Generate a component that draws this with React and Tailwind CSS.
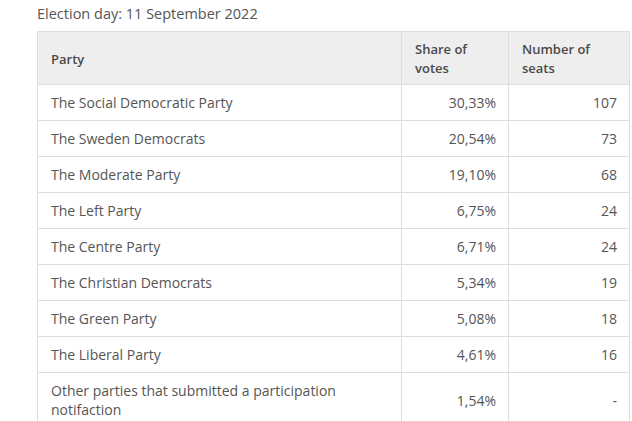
const rows = [
  ["The Social Democratic Party", "30,33%", "107"],
  ["The Sweden Democrats", "20,54%", "73"],
  ["The Moderate Party", "19,10%", "68"],
  ["The Left Party", "6,75%", "24"],
  ["The Centre Party", "6,71%", "24"],
  ["The Christian Democrats", "5,34%", "19"],
  ["The Green Party", "5,08%", "18"],
  ["The Liberal Party", "4,61%", "16"],
  ["Other parties that submitted a participation notifaction", "1,54%", "-"],
];

export default function App() {
  return (
    <div className="h-[421px] w-[632px] overflow-hidden bg-white pl-[37px] font-['Open_Sans',sans-serif] text-[#555]">
      <h2 className="-mt-[31px] h-[28px] text-[22px] font-bold leading-[28px] text-[#333]">
        Party strength in the Riksdag
      </h2>
      <p className="mt-[7px] text-[14.5px] leading-[20px] text-[#555]">Election day: 11 September 2022</p>
      <table className="mt-[7px] w-[592px] table-fixed border-collapse border border-[#dddddd] text-[14px]">
        <colgroup>
          <col className="w-[364px]" />
          <col className="w-[107px]" />
          <col className="w-[121px]" />
        </colgroup>
        <thead>
          <tr className="h-[53px] bg-[#eeeeee] text-left text-[13px] font-semibold leading-[19px] text-[#4a4a4a]">
            <th className="border border-[#dddddd] px-[13px] pt-[2px] font-semibold">Party</th>
            <th className="border border-[#dddddd] px-[13px] pt-[2px] font-semibold">Share of votes</th>
            <th className="border border-[#dddddd] px-[13px] pt-[2px] font-semibold">Number of seats</th>
          </tr>
        </thead>
        <tbody>
          {rows.map(([party, share, seats]) => (
            <tr key={party} className="h-[36px] leading-[19px]">
              <td className="border border-[#dddddd] px-[13px] py-[8px]">{party}</td>
              <td className="border border-[#dddddd] px-[12px] text-right">{share}</td>
              <td className="border border-[#dddddd] px-[12px] text-right">{seats}</td>
            </tr>
          ))}
        </tbody>
      </table>
    </div>
  );
}
